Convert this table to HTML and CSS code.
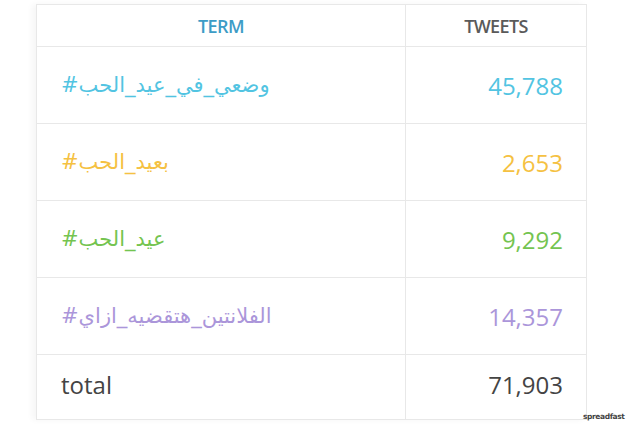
FILE: index.html
```html
<!DOCTYPE html>
<html>
<head>
<meta charset="utf-8">
<link rel="stylesheet" href="styles.css">
</head>
<body>
<div class="page">
  <table class="trends">
    <thead>
      <tr class="head">
        <th class="term-h">TERM</th>
        <th class="tweets-h">TWEETS</th>
      </tr>
    </thead>
    <tbody>
      <tr class="row c1">
        <td class="term"><span dir="ltr">#<span dir="rtl">وضعي_في_عيد_الحب</span></span></td>
        <td class="num">45,788</td>
      </tr>
      <tr class="row c2">
        <td class="term"><span dir="ltr">#<span dir="rtl">بعيد_الحب</span></span></td>
        <td class="num">2,653</td>
      </tr>
      <tr class="row c3">
        <td class="term"><span dir="ltr">#<span dir="rtl">عيد_الحب</span></span></td>
        <td class="num">9,292</td>
      </tr>
      <tr class="row c4">
        <td class="term"><span dir="ltr">#<span dir="rtl">الفلانتين_هتقضيه_ازاي</span></span></td>
        <td class="num">14,357</td>
      </tr>
      <tr class="total">
        <td class="term">total</td>
        <td class="num">71,903</td>
      </tr>
    </tbody>
  </table>
  <div class="mark">spreadfast</div>
</div>
</body>
</html>
```
FILE: styles.css
```css
html, body {
  margin: 0;
  padding: 0;
  background: #ffffff;
}
.page {
  position: relative;
  width: 640px;
  height: 425px;
  padding: 4px 0 0 36px;
  box-sizing: border-box;
  font-family: "Open Sans", "DejaVu Sans", sans-serif;
}
.trends {
  border-collapse: collapse;
  width: 551px;
  table-layout: fixed;
  box-shadow: -4px 0 6px rgba(0,0,0,0.04);
}
.trends th, .trends td {
  border: 1px solid #e8e8e8;
  padding: 0;
}
.term-h { width: 368px; }
.head th {
  height: 41px;
  font-size: 18px;
  font-weight: 600;
  text-align: center;
  letter-spacing: -0.6px;
}
.term-h { color: #3d9cc6; }
.tweets-h { color: #5a5a5a; }
.row td { height: 76px; }
.term {
  padding-left: 24px !important;
  font-family: "DejaVu Sans", sans-serif;
  font-size: 21px;
  text-align: left;
}
.num {
  text-align: right;
  padding-right: 23px !important;
  font-size: 24px;
  font-weight: 400;
}
.c1 td { color: #52c4e2; }
.c2 td { color: #f5c142; }
.c3 td { color: #74c450; }
.c4 td { color: #ab96da; }
.total td {
  height: 58px;
  color: #444444;
  padding-bottom: 6px;
}
.total .term {
  font-family: "Open Sans", sans-serif;
  font-size: 24px;
}
.mark {
  position: absolute;
  left: 583px;
  top: 412px;
  font-family: "DejaVu Sans", sans-serif;
  font-size: 7.5px;
  font-weight: bold;
  color: #444;
  letter-spacing: -0.4px;
}
```
